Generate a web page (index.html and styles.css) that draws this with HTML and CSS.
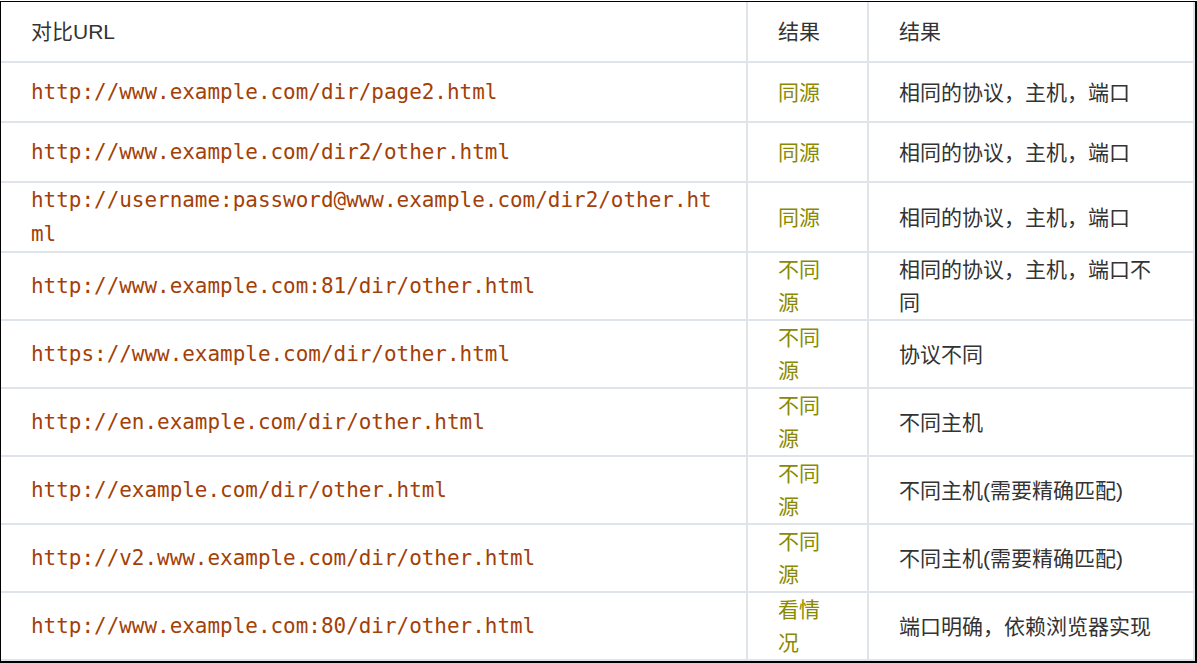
FILE: index.html
```html
<!DOCTYPE html>
<html lang="zh">
<head>
<meta charset="utf-8">
<title>同源对比</title>
<link rel="stylesheet" href="styles.css">
</head>
<body>
<div class="frame">
  <table class="origin-table">
    <thead>
      <tr>
        <th class="col-url">对比URL</th>
        <th class="col-result">结果</th>
        <th class="col-reason">结果</th>
      </tr>
    </thead>
    <tbody>
      <tr>
        <td><span class="url">http://www.example.com/dir/page2.html</span></td>
        <td class="result">同源</td>
        <td>相同的协议，主机，端口</td>
      </tr>
      <tr>
        <td><span class="url">http://www.example.com/dir2/other.html</span></td>
        <td class="result">同源</td>
        <td>相同的协议，主机，端口</td>
      </tr>
      <tr class="tall">
        <td><span class="url">http://username:password@www.example.com/dir2/other.html</span></td>
        <td class="result">同源</td>
        <td>相同的协议，主机，端口</td>
      </tr>
      <tr class="double">
        <td><span class="url">http://www.example.com:81/dir/other.html</span></td>
        <td class="result">不同源</td>
        <td>相同的协议，主机，端口不同</td>
      </tr>
      <tr class="double">
        <td><span class="url">https://www.example.com/dir/other.html</span></td>
        <td class="result">不同源</td>
        <td>协议不同</td>
      </tr>
      <tr class="double">
        <td><span class="url">http://en.example.com/dir/other.html</span></td>
        <td class="result">不同源</td>
        <td>不同主机</td>
      </tr>
      <tr class="double">
        <td><span class="url">http://example.com/dir/other.html</span></td>
        <td class="result">不同源</td>
        <td>不同主机(需要精确匹配)</td>
      </tr>
      <tr class="double">
        <td><span class="url">http://v2.www.example.com/dir/other.html</span></td>
        <td class="result">不同源</td>
        <td>不同主机(需要精确匹配)</td>
      </tr>
      <tr class="double">
        <td><span class="url">http://www.example.com:80/dir/other.html</span></td>
        <td class="result">看情况</td>
        <td>端口明确，依赖浏览器实现</td>
      </tr>
    </tbody>
  </table>
</div>
</body>
</html>
```

FILE: styles.css
```css
html, body {
  margin: 0;
  padding: 0;
  background: #fff;
}

.frame {
  box-sizing: border-box;
  width: 1197px;
  height: 662px;
  margin-top: 1px;
  border: 1px solid #000;
  border-right-width: 2px;
  border-bottom-width: 2px;
  overflow: hidden;
}

.origin-table {
  width: 1194px;
  table-layout: fixed;
  border-collapse: separate;
  border-spacing: 0;
  font-family: "Liberation Sans", "Noto Sans CJK SC", sans-serif;
  font-size: 21px;
  color: #333;
}

.origin-table th,
.origin-table td {
  box-sizing: border-box;
  padding: 0 30px;
  height: 60px;
  line-height: 33px;
  text-align: left;
  vertical-align: middle;
  font-weight: normal;
  border-right: 2px solid #dfe3ea;
  border-bottom: 2px solid #dfe3ea;
}

.origin-table th {
  height: 61px;
}

.col-url { width: 747px; }
.col-result { width: 121px; }
.col-reason { width: 326px; }

.origin-table tr.tall td { height: 70px; }
.origin-table tr.double td { height: 68px; }

.url {
  display: block;
  font-family: "DejaVu Sans Mono", "Liberation Mono", monospace;
  font-size: 20.95px;
  line-height: 34px;
  color: #a33f08;
  word-break: break-all;
}

.result {
  color: #8a8a00;
}
```
